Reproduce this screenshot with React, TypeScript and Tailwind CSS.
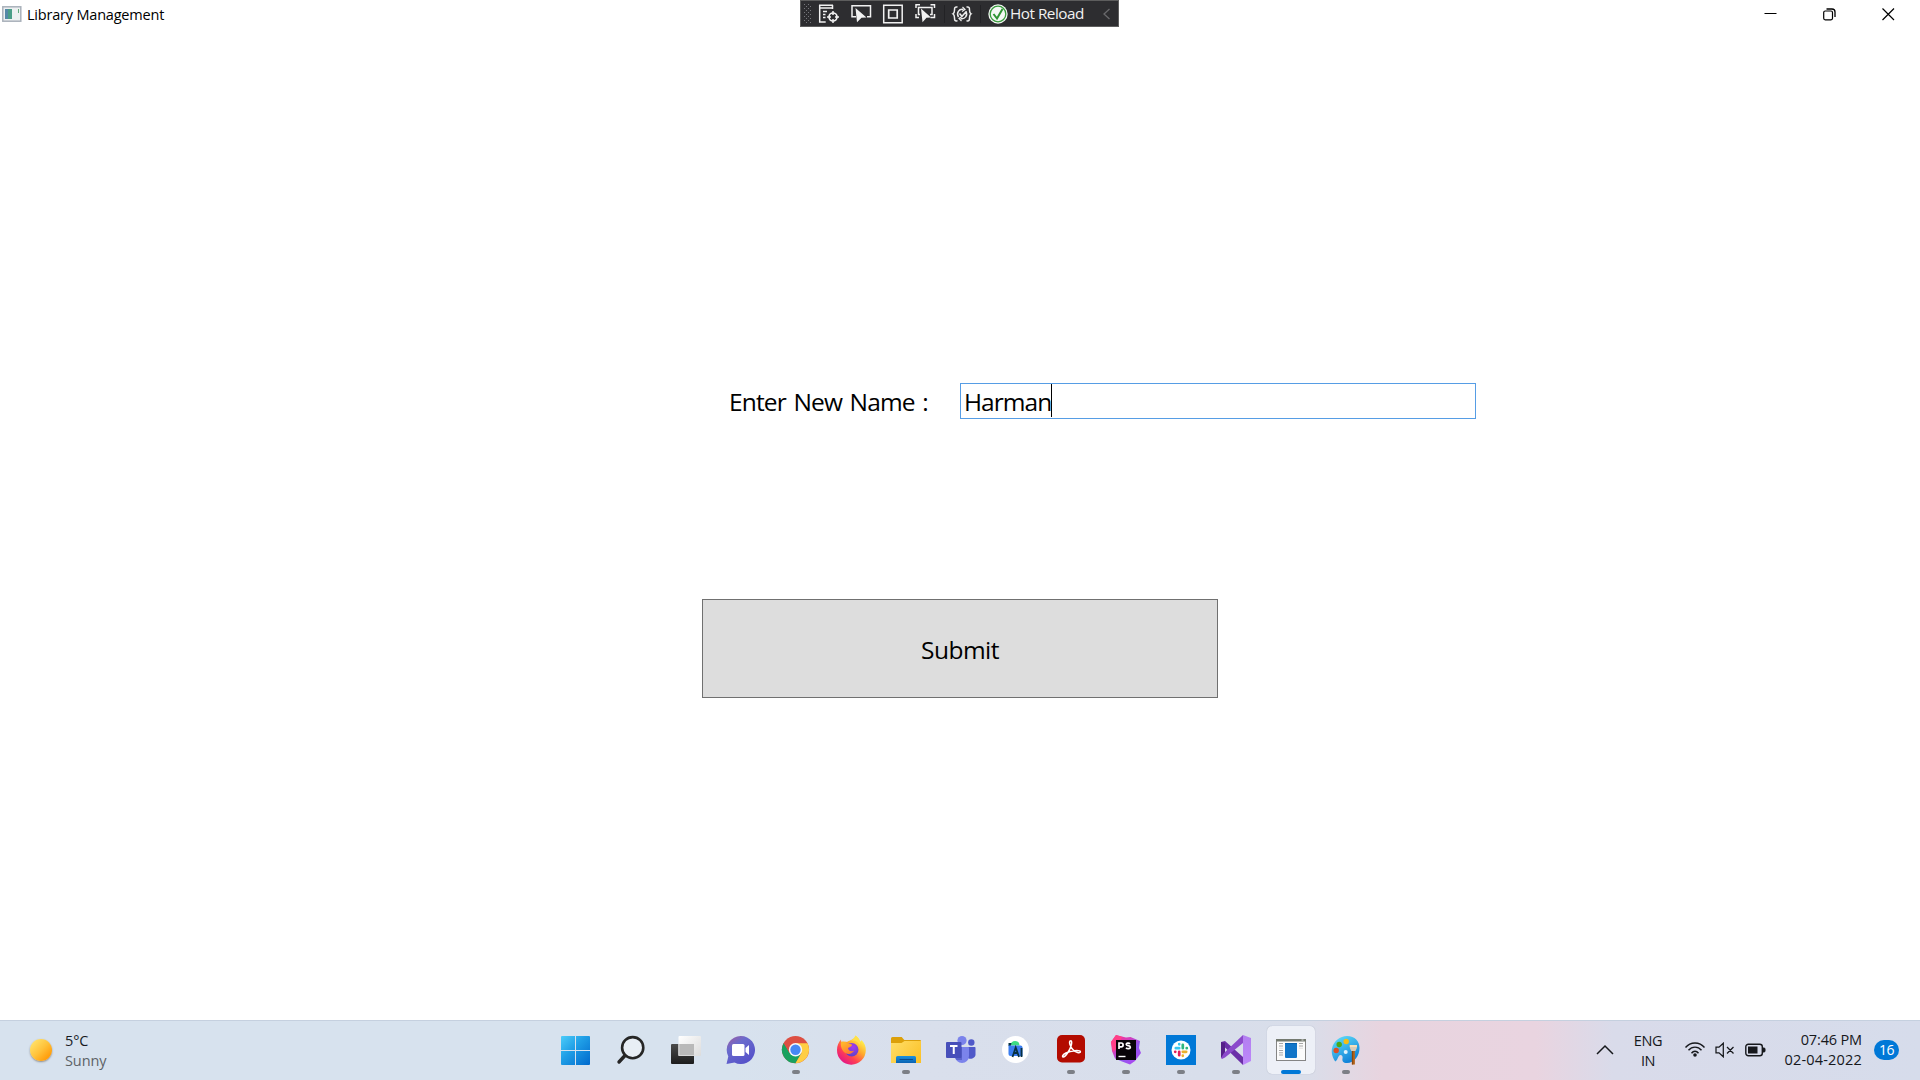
import React from "react";

type IconProps = { children: React.ReactNode; w?: number; h?: number; className?: string };

const Svg = ({ children, w = 30, h = 30, className = "" }: IconProps) => (
  <svg width={w} height={h} viewBox={`0 0 ${w} ${h}`} fill="none" className={`shrink-0 ${className}`}>
    {children}
  </svg>
);

const StartIcon = () => (
  <Svg className="mr-[2px]">
    <defs>
      <linearGradient id="win" x1="0" y1="0" x2="30" y2="30" gradientUnits="userSpaceOnUse">
        <stop stopColor="#4fd0fb" />
        <stop offset=".45" stopColor="#1f9ee6" />
        <stop offset="1" stopColor="#0069cc" />
      </linearGradient>
    </defs>
    <path d="M2 1h13v14H1V2a1 1 0 0 1 1-1ZM16 1h13a1 1 0 0 1 1 1v13H16ZM1 16h14v14H2a1 1 0 0 1-1-1ZM16 16h14v13a1 1 0 0 1-1 1H16Z" fill="url(#win)" />
  </Svg>
);

const SearchIcon = () => (
  <Svg className="mr-[2px]">
    <circle cx="17.7" cy="12.7" r="10.6" fill="#eff3f8" fillOpacity=".7" stroke="#262626" strokeWidth="2.6" />
    <path d="m10 20.5-6 6.5" stroke="#262626" strokeWidth="3.4" strokeLinecap="round" />
  </Svg>
);

const TaskViewIcon = () => (
  <Svg>
    <defs>
      <linearGradient id="tv" x1="0" y1="9" x2="0" y2="29" gradientUnits="userSpaceOnUse">
        <stop stopColor="#4b4b4b" /><stop offset="1" stopColor="#1c1c1c" />
      </linearGradient>
      <linearGradient id="tw" x1="8" y1="1" x2="30" y2="21" gradientUnits="userSpaceOnUse">
        <stop stopColor="#fff" /><stop offset="1" stopColor="#dcdcdc" />
      </linearGradient>
    </defs>
    <rect x="0" y="9" width="23" height="20" rx="1" fill="url(#tv)" />
    <rect x="7.500" y="1" width="22.500" height="20" rx="1" fill="url(#tw)" />
    <path d="M7.500 9H23v12H7.500Z" fill="#b9b9b9" />
    <path d="M8 9v11.500h15" stroke="#d7d7d7" />
  </Svg>
);

const ChatIcon = () => (
  <Svg className="mr-[2px]">
    <defs>
      <linearGradient id="chat" x1="4" y1="3" x2="22" y2="29" gradientUnits="userSpaceOnUse">
        <stop stopColor="#9660a8" /><stop offset=".3" stopColor="#6a6bcd" /><stop offset="1" stopColor="#5450c9" />
      </linearGradient>
    </defs>
    <path d="M16 1a14 14 0 1 1-6.500 26.400L1.500 29l1.800-7.500A14 14 0 0 1 16 1Z" fill="url(#chat)" />
    <rect x="7" y="9" width="12.500" height="12" rx="1.500" fill="#fff" />
    <path d="m20.500 13 3.500-3v10l-3.500-3Z" fill="#fff" />
  </Svg>
);

const ChromeIcon = () => (
  <Svg className="mr-[1px]">
    <circle cx="15.500" cy="14.700" r="13.600" fill="#dd4f43" />
    <path d="M3.700 7.900A13.600 13.600 0 0 0 15.500 28.300l6-10.200-6 2.700-6-2.700Z" fill="#19a15f" />
    <path d="M15.500 28.300A13.600 13.600 0 0 0 27.500 8.300h-12l6 9.800Z" fill="#ffce44" />
    <path d="M3.700 7.900 9.800 18l5.700-10Z" fill="#dd4f43" />
    <circle cx="15.500" cy="14.700" r="6.700" fill="#f5f7fb" />
    <circle cx="15.500" cy="14.700" r="5.200" fill="#4688f4" />
  </Svg>
);

const FirefoxIcon = () => (
  <Svg>
    <defs>
      <linearGradient id="ff" x1="25" y1="4" x2="6" y2="27" gradientUnits="userSpaceOnUse">
        <stop stopColor="#fff44f" /><stop offset=".35" stopColor="#ffa92b" /><stop offset=".68" stopColor="#ff4152" /><stop offset="1" stopColor="#e31587" />
      </linearGradient>
      <radialGradient id="ffp" cx=".6" cy=".3" r=".7">
        <stop stopColor="#a53af0" /><stop offset="1" stopColor="#5b42c9" />
      </radialGradient>
      <linearGradient id="ffo" x1="8" y1="8" x2="14" y2="20" gradientUnits="userSpaceOnUse">
        <stop stopColor="#ffb52b" /><stop offset="1" stopColor="#ff7130" />
      </linearGradient>
    </defs>
    <path d="M19.500.5c2.500 1.500 4 3.500 4.700 6 .8-.3 1.200-1 1.300-1.500 3.200 3 4.500 7 4.300 10.500A14.400 14.400 0 0 1 1 15C1 10.500 2.500 7.500 5 4.500c0 1.500.3 2.500 1 3.300 1.500-.9 3-1.200 5-.8C14 5 17.500 5 19.500.5Z" fill="url(#ff)" />
    <circle cx="15.700" cy="14.800" r="6.800" fill="url(#ffp)" />
    <path d="M5 7c3-1 5-.3 6.500 1.500l4 .7c.8.300.5 1.800-.5 2.300l-3 1.500c.5 3 3 4 6 2.800-2 4-8 4.200-11 .2C5 13 4.500 10 5 7Z" fill="url(#ffo)" />
    <path d="M19.500.5c4 3 5 6 4.500 10-.8-2-2-3.500-4.500-4.500-1.500-.6-3.500-.4-5 0C17.500 4.500 19 3 19.500.5Z" fill="#ffe04a" />
  </Svg>
);

const FolderIcon = () => (
  <Svg>
    <defs>
      <linearGradient id="fold" x1="0" y1="4" x2="30" y2="28" gradientUnits="userSpaceOnUse">
        <stop stopColor="#ffdf6b" /><stop offset="1" stopColor="#fbc024" />
      </linearGradient>
      <linearGradient id="foldb" x1="0" y1="21" x2="0" y2="28" gradientUnits="userSpaceOnUse">
        <stop stopColor="#1b91dd" /><stop offset="1" stopColor="#0b62b2" />
      </linearGradient>
    </defs>
    <path d="M1.500 2h9.200l2.600 3H29a1 1 0 0 1 1 1v4H0V3.500A1.500 1.500 0 0 1 1.500 2Z" fill="#dca00a" />
    <path d="M0 8h10.500l3-2H30v22H0Z" fill="url(#fold)" />
    <path d="M5 28v-5.500A1.500 1.500 0 0 1 6.500 21h17a1.500 1.500 0 0 1 1.500 1.500V28Z" fill="url(#foldb)" />
    <path d="M9 24.500h12.500" stroke="#0a4b8b" strokeLinecap="round" />
  </Svg>
);

const TeamsIcon = () => (
  <Svg>
    <circle cx="16" cy="5.500" r="4.600" fill="#7b83eb" />
    <circle cx="25.300" cy="7.500" r="3.200" fill="#5059c9" />
    <path d="M20 12h8.500c.6 0 1 .4 1 1v6.500c0 4-6 6-9 2.500Z" fill="#5059c9" />
    <path d="M9 12h13a1 1 0 0 1 1 1v8a7 7 0 0 1-14 0Z" fill="#7b83eb" />
    <path d="M9 12h7v13H10.500C9 23 9 22 9 20Z" fill="#5b64cb" />
    <rect x="0" y="7" width="15.500" height="16" rx="1" fill="#474fba" />
    <path d="M4 11h7.500M7.750 11v8" stroke="#fff" strokeWidth="2" />
  </Svg>
);

const AndroidStudioIcon = () => (
  <Svg className="mr-[1px]">
    <circle cx="15.500" cy="14.500" r="13.500" fill="#fff" />
    <path d="M10.500 10.500c0-3 2-4.500 4.500-4.500s4.500 1.500 4.500 4.500Z" fill="#3ddc84" />
    <path d="M8.500 8h3l-.8 3H8.500Z" fill="#073042" />
    <path d="M8.500 10.500h12a2 2 0 0 1 2 2V21H10.500a2 2 0 0 1-2-2Z" fill="#3a7df0" />
    <path d="m12.500 22 3.200-9.500L19 22M14 18h4M21.500 13v9" stroke="#073042" strokeWidth="1.800" />
  </Svg>
);

const AcrobatIcon = () => (
  <Svg>
    <rect x="1" y="0" width="28" height="27.500" rx="5" fill="#b30b00" />
    <path d="M14.700 5.800c-2.500.3-.4 6 2.100 8.800 2.600 3 7.700 4 7.600 2.200-.2-2-9.400-1.400-14.400 1.200-3.300 1.700-4.200 3.700-2.800 3.900 2.200.3 6.300-6.300 7.900-11 .8-2.700.8-5.300-.4-5.100Z" stroke="#fff" strokeWidth="1.500" />
  </Svg>
);

const PhpStormIcon = () => (
  <Svg>
    <defs>
      <linearGradient id="ps" x1="3" y1="1" x2="27" y2="29" gradientUnits="userSpaceOnUse">
        <stop stopColor="#ff318c" /><stop offset=".3" stopColor="#d83cb8" /><stop offset=".6" stopColor="#8f58ee" /><stop offset="1" stopColor="#b345f1" />
      </linearGradient>
    </defs>
    <path d="m0 7 5-7 10 2.500L19.500 2l9.500 4-1 7 2 5-6 8-5 3.500-8-3-7-3L1 16Z" fill="url(#ps)" />
    <path d="M0 7 5 0l6 2-6 12-3 3Z" fill="#ff4088" />
    <rect x="5" y="5" width="20" height="20" fill="#080408" />
    <path d="M8 14V8h2.200a1.700 1.700 0 0 1 0 3.800H8M19 8.900c-1-1.200-4-1-3.700.7.300 1.500 3.900.7 4 2.500.1 2-3.300 1.900-4.300.7" stroke="#fff" strokeWidth="1.700" />
    <path d="M7.500 21.500h7" stroke="#fff" strokeWidth="1.400" />
  </Svg>
);

const SlackIcon = () => (
  <Svg>
    <path d="M0 0h30v30H0Z" fill="#0078d7" />
    <circle cx="15" cy="15" r="9.500" fill="#fff" />
    <g strokeWidth="2.700" strokeLinecap="round">
      <path d="M9.800 13.200h3.400M13.200 9.200v.1" stroke="#36c5f0" />
      <path d="M16.800 9.800v3.400M20.800 13.200h-.1" stroke="#2eb67d" />
      <path d="M20.200 16.800h-3.400M16.800 20.800v-.1" stroke="#ecb22e" />
      <path d="M13.200 20.200v-3.400M9.200 16.800h.1" stroke="#e01e5a" />
    </g>
  </Svg>
);

const VisualStudioIcon = () => (
  <Svg>
    <defs>
      <linearGradient id="vs" x1="26" y1="0" x2="26" y2="30" gradientUnits="userSpaceOnUse">
        <stop stopColor="#b27ff0" /><stop offset="1" stopColor="#be88fa" />
      </linearGradient>
    </defs>
    <path d="m0 7 4-1 18 16v8L3 11.500 0 12Z" fill="#6b2fa8" />
    <path d="M0 7 4 8v13l-4 2Z" fill="#542088" />
    <path d="m0 23 1 1 3-1.500L22 8V0L3 18Z" fill="#8b4acb" />
    <path d="m22 0 8 3v23l-8 4Z" fill="url(#vs)" />
  </Svg>
);

const WpfAppIcon = () => (
  <Svg>
    <rect x=".5" y="4.500" width="29" height="21" fill="#fbfbfb" stroke="#858585" />
    <path d="M0 4h30v2.500H0Z" fill="#747a70" />
    <path d="M25.500 5h2" stroke="#ddd" />
    <path d="M3 8.500h4M3 11h4M23 8.500h4M23 11h4M3 15.500h4M3 17.800h4M3 20h4" stroke="#a6a6a6" />
    <path d="M3 13.200h4M23 13.200h4" stroke="#dedede" />
    <rect x="9" y="8" width="12" height="15" rx="1" fill="#1175c8" />
    <path d="M9 8.500h12" stroke="#0862b0" />
  </Svg>
);

const PaintIcon = () => (
  <Svg className="mr-[1px]">
    <defs>
      <linearGradient id="pal" x1="6" y1="3" x2="20" y2="29" gradientUnits="userSpaceOnUse">
        <stop stopColor="#5bd8f7" /><stop offset="1" stopColor="#0b7bd6" />
      </linearGradient>
    </defs>
    <path d="M17 1c8 0 12.500 5 12.500 12 0 8-5.500 15-12.500 15-4 0-5-2-4.500-4.500.5-2-.5-3.500-2-3.500-2.500 0-2 4-5 6.500C3 24 1 18 2 13.500 3.500 6 10 1 17 1Z" fill="url(#pal)" />
    <circle cx="6.200" cy="15.500" r="2.700" fill="#dc4f24" />
    <circle cx="9.200" cy="9.500" r="2.700" fill="#4aa81a" />
    <circle cx="16.200" cy="6.500" r="2.700" fill="#f6bd14" />
    <circle cx="15.700" cy="17" r="2" fill="#dff1fb" />
    <path d="M21.900 16h3v13.500h-3Z" fill="#b6651b" />
    <path d="M21.900 16h1.300v13.500h-1.300Z" fill="#8a480f" />
    <path d="M19.800 10h7.200v2c0 1.500-1 2.500-1.500 4H21.300c-.5-1.500-1.500-2.500-1.500-4Z" fill="#d8cbb8" />
    <path d="M19.800 10h7.200v2h-7.200Z" fill="#f5dfba" />
  </Svg>
);

const apps: { name: string; icon: React.ReactNode; state?: "running" | "active" }[] = [
  { name: "Start", icon: <StartIcon /> },
  { name: "Search", icon: <SearchIcon /> },
  { name: "Task view", icon: <TaskViewIcon /> },
  { name: "Chat", icon: <ChatIcon /> },
  { name: "Chrome", icon: <ChromeIcon />, state: "running" },
  { name: "Firefox", icon: <FirefoxIcon /> },
  { name: "File Explorer", icon: <FolderIcon />, state: "running" },
  { name: "Teams", icon: <TeamsIcon /> },
  { name: "Android Studio", icon: <AndroidStudioIcon /> },
  { name: "Acrobat", icon: <AcrobatIcon />, state: "running" },
  { name: "PhpStorm", icon: <PhpStormIcon />, state: "running" },
  { name: "Slack", icon: <SlackIcon />, state: "running" },
  { name: "Visual Studio", icon: <VisualStudioIcon />, state: "running" },
  { name: "Library Management", icon: <WpfAppIcon />, state: "active" },
  { name: "Paint", icon: <PaintIcon />, state: "running" },
];

function DebugToolbar() {
  return (
    <div className="flex h-[27px] items-center border border-[#5d5d5d] bg-[#2d2d30] text-[#f1f1f1]">
      <svg width="209" height="25" viewBox="801 1 209 25" fill="none" className="shrink-0">
        <defs>
          <pattern id="grip" width="4" height="4" patternUnits="userSpaceOnUse">
            <path d="M0 0h1v1H0ZM2 2h1v1H2Z" fill="#77777b" />
          </pattern>
        </defs>
        <path d="M804 3h7v21h-7Z" fill="url(#grip)" />
        <g stroke="#f1f1f1" strokeWidth="1.500">
          <path d="M819 5.300h14M819 8h14" />
          <path d="M819.700 5v17h6M832.500 5v4M823 11.500h4M823 14.500h2.500M823 17.500h2.500" />
          <circle cx="833" cy="17" r="4" strokeWidth="1.700" />
          <path d="M833 11v4M833 19v4M827 17h4M835 17h4" />
          <path d="M856 16.700h-4V5.700h18.500v11H867" />
          <path d="M883.700 5.200h18.500v17.600h-18.500Z" />
          <path d="M888.700 10h8.500v8h-8.500Z" strokeWidth="1.700" />
          <path d="M916 8V4.700h4M930.500 4.700h4V8M934.500 14v3.500h-4M916 14v3.500h3M920 14.500h-1.500v-7h13.500v7h-2" />
        </g>
        <path d="m855.500 8 11 9.500-5 .3-4.500 4.500ZM921 8.500l10 9-4.500.3-4 4.500Z" fill="#f1f1f1" />
        <path d="M944.500 5v18M980.500 5v18" stroke="#222225" />
        <g stroke="#ececec" strokeWidth="1.500">
          <path d="M957.500 7c-3-.5-3 1-3 3s0 3-1.500 3.800c1.500.8 1.500 2 1.500 4s0 3.500 3 3M966.500 7c3-.5 3 1 3 3s0 3 1.500 3.800c-1.500.8-1.500 2-1.500 4s0 3.500-3 3" />
          <path d="M958.500 17c-2.500-4 .5-8.500 5-7.500M966 11.500c2 4-1 8-5.500 7M959.500 13.500l2.500 2.800 4.500-5" />
          <path d="m962.500 7 2.500 2.500-3 2M961.500 21l-2.500-2.700 3-1.800" strokeWidth="1.200" />
        </g>
        <circle cx="998" cy="14" r="9.700" fill="#f5f8f5" />
        <circle cx="998" cy="14" r="7.800" stroke="#389b3c" strokeWidth="1.300" />
        <path d="m993.500 14 3.500 4.500 5.500-9.500" stroke="#2f9434" strokeWidth="2" />
      </svg>
      <span className="mb-[2px] w-[92px] shrink-0 whitespace-nowrap text-[15.300px] leading-5 tracking-[-0.500px]">Hot Reload</span>
      <Svg w={10} h={14}><path d="m7.500 2-5.500 5 5.500 5" stroke="#69696c" strokeWidth="1.300" /></Svg>
    </div>
  );
}

export default function App() {
  return (
    <div className="flex h-[1080px] w-[1920px] flex-col overflow-hidden bg-white font-['Open_Sans','Noto_Sans',sans-serif] text-black">
      <header className="grid h-[28px] shrink-0 grid-cols-[800px_319px_1fr]">
        <div className="flex h-[28px] items-center pl-[2px]">
          <Svg w={20} h={16}>
            <rect x=".8" y=".8" width="18" height="14.400" fill="#edf0f1" stroke="#a9b1ba" strokeWidth="1.500" />
            <path d="M3 3h7v10H3Z" fill="#4a9d87" />
            <path d="M3 3h3v10H3Z" fill="#5488a7" />
            <path d="M16.500 3v4" stroke="#62aa7d" />
          </Svg>
          <span className="ml-[5px] mt-[2px] text-[14.500px] leading-5 tracking-[-0.200px]">Library Management</span>
        </div>
        <DebugToolbar />
        <div className="flex h-[28px] items-center justify-end gap-[46px] pr-[25px]">
          <Svg w={13} h={13}><path d="M.5 5.500h12" stroke="#000" /></Svg>
          <Svg w={13} h={13}>
            <path d="M3.500 1H9a3 3 0 0 1 3 3v5" stroke="#000" strokeWidth="1.300" />
            <rect x=".7" y="3" width="8.800" height="8.800" rx="1.500" stroke="#000" strokeWidth="1.200" />
          </Svg>
          <Svg w={13} h={13}><path d="m.5.500 11.500 11.500M12 .5.500 12" stroke="#000" strokeWidth="1.200" /></Svg>
        </div>
      </header>

      <main className="flex flex-1 flex-col pt-[355px]">
        <div className="flex h-[36px] items-center">
          <label className="w-[960px] whitespace-nowrap pl-[729px] pt-[2px] text-[24.500px] leading-9 tracking-[-0.850px] [word-spacing:2px]">Enter New Name :</label>
          <div className="flex h-[36px] w-[516px] items-center border border-[#569de5] pl-[3px]">
            <span className="pt-[2px] text-[24.500px] leading-9 tracking-[-0.950px]">Harman</span>
            <span className="mb-px h-[33px] w-px bg-black" />
          </div>
        </div>
        <button className="ml-[702px] mt-[180px] h-[99px] w-[516px] border border-[#707070] bg-[#dddddd] pt-[3px] text-[24.500px] leading-9 tracking-[-0.500px]">
          Submit
        </button>
      </main>

      <footer className="flex h-[60px] shrink-0 border-t border-[#c5d0df] bg-[linear-gradient(90deg,#d7e2ee_0%,#d7e2ee_38%,#d9dfec_48%,#d8deeb_63%,#d9deea_68%,#e8d4df_72%,#e9d4e0_80%,#d9dbea_84%,#d6dceb_100%)]">
        <div className="flex w-[548px] items-start pl-[30px]">
          <div className="mt-[18px] h-[22px] w-[22px] rounded-full bg-[linear-gradient(135deg,#ffe36b_10%,#ffc23a_50%,#ff9500_90%)] shadow-[0_1px_2px_#8b8b8b]" />
          <div className="ml-[13px] mt-[10px] text-[14.500px] leading-5 tracking-[-0.100px]">
            <div className="text-[#16191d]">5°C</div>
            <div className="text-[#5d6267]">Sunny</div>
          </div>
        </div>
        <nav className="flex w-[825px] shrink-0">
          {apps.map((app) => (
            <div key={app.name} className="flex w-[55px] flex-col items-center pt-[5px]">
              <div
                className={
                  app.state === "active"
                    ? "flex h-[48px] w-[48px] flex-col items-center rounded-[5px] bg-[#edf0f7] pt-[9px] shadow-[0_0_1px_#9ea5b5]"
                    : "flex h-[48px] w-[48px] flex-col items-center pt-[9px]"
                }
              >
                {app.icon}
                {app.state === "running" && <span className="mt-[5px] h-1 w-2 rounded-full bg-[#7c7f86]" />}
                {app.state === "active" && <span className="mt-[5px] h-1 w-5 rounded-full bg-[#0078d7]" />}
              </div>
            </div>
          ))}
        </nav>
        <div className="flex flex-1 items-start pl-[223px] text-[#16181c]">
          <Svg w={18} h={12} className="mt-[23px]"><path d="m1 10 8-8 8 8" stroke="currentColor" strokeWidth="1.500" /></Svg>
          <div className="ml-[14px] mt-[10px] w-[40px] text-center text-[14.500px] leading-5 tracking-[-0.400px]">
            <div>ENG</div>
            <div>IN</div>
          </div>
          <Svg w={22} h={18} className="ml-[16px] mt-[20px]">
            <path d="M1.500 6.500c5-6 14-6 19 0M4.500 9.300c3.500-4.300 9.500-4.300 13 0M7.500 12.200c2-2.600 5-2.600 7 0" stroke="currentColor" strokeWidth="1.400" />
            <circle cx="11" cy="14" r="1.800" fill="currentColor" />
          </Svg>
          <Svg w={20} h={16} className="ml-[9px] mt-[21px]">
            <path d="M1 5.200h3l4.300-4v13.600l-4.300-4H1ZM12 5l6.500 6.500M18.500 5 12 11.500" stroke="currentColor" strokeWidth="1.250" />
          </Svg>
          <Svg w={21} h={14} className="ml-[10px] mt-[22px]">
            <rect x=".8" y="1.300" width="16.500" height="11.400" rx="2.500" stroke="currentColor" strokeWidth="1.400" />
            <rect x="3" y="3.500" width="9.500" height="7" fill="currentColor" />
            <path d="M18 5h1.500l.5 1v2l-.5 1H18Z" fill="currentColor" stroke="currentColor" />
          </Svg>
          <div className="ml-[12px] mt-[9px] w-[84px] whitespace-nowrap text-right text-[14.500px] leading-5">
            <div className="tracking-[-0.150px]">07:46 PM</div>
            <div className="tracking-[0.180px]">02-04-2022</div>
          </div>
          <div className="ml-[12px] mt-[19px] flex h-[20px] w-[25px] items-center justify-center rounded-full bg-[#0078d7] text-[14px] leading-5 tracking-[-0.500px] text-white">16</div>
        </div>
      </footer>
    </div>
  );
}
